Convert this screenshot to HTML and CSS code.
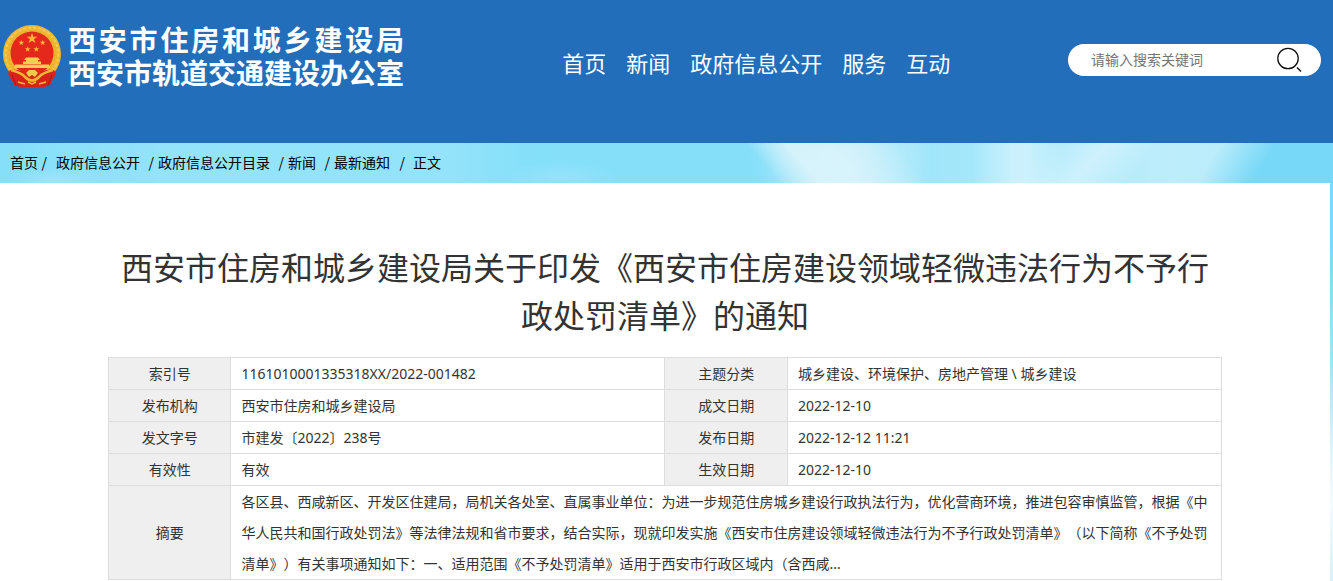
FILE: index.html
```html
<!DOCTYPE html>
<html lang="zh-CN">
<head>
<meta charset="utf-8">
<meta name="viewport" content="width=device-width, initial-scale=1">
<title>西安市住房和城乡建设局</title>
<link rel="stylesheet" href="styles.css">
</head>
<body>
<header class="site-header">
  <div class="brand">
    <svg class="emblem" viewBox="0 0 60 64" aria-hidden="true">
      <path fill="#d9221c" d="M9 44 L6 47 L12 61 L18 63 L42 63 L48 61 L54 47 L51 44Z"/>
      <circle cx="30" cy="30" r="29" fill="#efb72f"/>
      <circle cx="30" cy="30" r="26.5" fill="none" stroke="#f5cb4c" stroke-width="2" stroke-dasharray="3 2"/>
      <circle cx="30" cy="30" r="23" fill="none" stroke="#e2a52a" stroke-width="1" stroke-dasharray="2 3"/>
      <circle cx="30" cy="29" r="21.5" fill="#e5281c"/>
      <defs><path id="star" d="M0 -5 L1.2 -1.6 L4.8 -1.6 L1.9 .6 L3 4 L0 2 L-3 4 L-1.9 .6 L-4.8 -1.6 L-1.2 -1.6Z"/></defs>
      <g fill="#f5b83b">
        <use href="#star" transform="translate(30 14.500) scale(1.100)"/>
        <use href="#star" transform="translate(19.300 18.700) scale(.6)"/>
        <use href="#star" transform="translate(40.700 18.700) scale(.6)"/>
        <use href="#star" transform="translate(25.700 25.300) scale(.6)"/>
        <use href="#star" transform="translate(34.300 25.300) scale(.6)"/>
      </g>
      <g fill="#f7cf50">
        <path d="M24 33.500h12l2 2.500h-2v1.500h3V40H21v-2.500h3V36h-2z"/>
        <path d="M13 40.500h34l1 3.500H12z"/>
      </g>
      <path fill="#d9221c" d="M8 46 Q18 45 23 49 L37 49 Q42 45 52 46 L54 50 L47 62 L36 59 L30 62 L24 59 L13 62 L6 50Z"/>
      <path fill="none" stroke="#efb72f" stroke-width="2.500" d="M9 46 Q20 49 23 53 Q30 60 37 53 Q40 49 51 46"/>
      <path fill="#f5ca4b" d="M24 49 L27 46 H33 L36 49 L33 53 L30 51 L27 53Z"/>
      <path fill="none" stroke="#f2bd35" stroke-width="1.500" d="M16 58 L23 60 M37 60 L44 58 M26 58 L30 60 L34 58"/>
      <path fill="none" stroke="#9f1b1b" stroke-width="1" d="M10 51 L14 61 M50 51 L46 61"/>
    </svg>
    <div class="brand-name">
      <div class="brand-line">西安市住房和城乡建设局</div>
      <div class="brand-line">西安市轨道交通建设办公室</div>
    </div>
  </div>
  <nav class="main-nav" aria-label="主导航">
    <a href="#">首页</a>
    <a href="#">新闻</a>
    <a href="#">政府信息公开</a>
    <a href="#">服务</a>
    <a href="#">互动</a>
  </nav>
  <form class="search" role="search">
    <input class="search-input" type="text" placeholder="请输入搜索关键词" aria-label="请输入搜索关键词">
    <button class="search-button" type="button" aria-label="搜索">
      <svg viewBox="0 0 28 28" width="28" height="28" aria-hidden="true">
        <circle cx="13" cy="12.500" r="10.200" fill="none" stroke="#111" stroke-width="1.300"/>
        <path d="M22 21.500 L26 25.500" stroke="#111" stroke-width="1.500"/>
      </svg>
    </button>
  </form>
</header>
<nav class="breadcrumb" aria-label="当前位置">
  <a href="#">首页</a><span class="sep sep-first">/</span>
  <a href="#">政府信息公开</a><span class="sep">/</span>
  <a href="#">政府信息公开目录</a><span class="sep">/</span>
  <a href="#">新闻</a><span class="sep">/</span>
  <a href="#">最新通知</a><span class="sep sep-last">/</span>
  <span>正文</span>
</nav>
<main class="article">
  <h1 class="article-title">西安市住房和城乡建设局关于印发《西安市住房建设领域轻微违法行为不予行政处罚清单》的通知</h1>
  <table class="meta">
    <colgroup><col class="col-label"><col class="col-value"><col class="col-label"><col class="col-value"></colgroup>
    <tbody>
      <tr><th scope="row">索引号</th><td>1161010001335318XX/2022-001482</td><th scope="row">主题分类</th><td>城乡建设、环境保护、房地产管理 \ 城乡建设</td></tr>
      <tr><th scope="row">发布机构</th><td>西安市住房和城乡建设局</td><th scope="row">成文日期</th><td>2022-12-10</td></tr>
      <tr><th scope="row">发文字号</th><td>市建发〔2022〕238号</td><th scope="row">发布日期</th><td>2022-12-12 11:21</td></tr>
      <tr><th scope="row">有效性</th><td>有效</td><th scope="row">生效日期</th><td>2022-12-10</td></tr>
      <tr><th scope="row">摘要</th><td colspan="3">各区县、西咸新区、开发区住建局，局机关各处室、直属事业单位：为进一步规范住房城乡建设行政执法行为，优化营商环境，推进包容审慎监管，根据《中华人民共和国行政处罚法》等法律法规和省市要求，结合实际，现就印发实施《西安市住房建设领域轻微违法行为不予行政处罚清单》（以下简称《不予处罚清单》）有关事项通知如下：一、适用范围《不予处罚清单》适用于西安市行政区域内（含西咸...</td></tr>
    </tbody>
  </table>
</main>
</body>
</html>
```
FILE: styles.css
```css
* { box-sizing: border-box; }

body {
  margin: 0;
  font-family: "Noto Sans", "Noto Sans CJK SC", sans-serif;
  font-size: 14px;
  color: #333;
  text-spacing-trim: space-all;
  background: linear-gradient(180deg, #7dd9f7 0, #7dd9f7 240px, #9fe3f8 360px, #e4f6fd 460px, #f4fbfe 500px, #d8f1fb 581px);
}

a { color: inherit; text-decoration: none; }

.site-header,
.article-title {
  font-family: "Liberation Sans", "Noto Sans CJK SC", sans-serif;
}

.site-header {
  display: flex;
  align-items: flex-start;
  min-height: 143px;
  padding: 24px 12px 24px 2px;
  background: #226ebb;
  color: #fff;
}

.brand { display: flex; gap: 6px; flex: none; }
.emblem { width: 60px; height: 64px; }
.brand-name {
  padding-top: 1px;
  font-size: 28px;
  font-weight: 700;
  line-height: 33px;
}
.brand-line { text-align: justify; text-align-last: justify; white-space: nowrap; }

.main-nav {
  display: flex;
  gap: 20px;
  margin-left: 12%;
  padding-top: 24px;
  font-size: 22px;
  line-height: 33px;
  white-space: nowrap;
}

.search {
  display: flex;
  align-items: center;
  width: 253px;
  height: 32px;
  margin: 20px 0 0 auto;
  padding: 0 18px 0 23px;
  border-radius: 16px;
  background: #fff;
}
.search-input {
  flex: 1;
  min-width: 0;
  height: 32px;
  padding: 0;
  border: 0;
  outline: 0;
  background: transparent;
  font-family: inherit;
  font-size: 14px;
}
.search-input::placeholder { color: #757575; }
.search-button {
  display: flex;
  padding: 0;
  border: 0;
  background: transparent;
}

.breadcrumb {
  display: flex;
  align-items: center;
  height: 40px;
  padding: 0 10px 2px;
  font-family: "Noto Sans CJK SC", sans-serif;
  color: #000;
  background:
    radial-gradient(ellipse 60px 16px at 42% 85%, rgba(255, 255, 255, .14), transparent),
    radial-gradient(ellipse 50px 14px at 4% 95%, rgba(255, 255, 255, .16), transparent),
    linear-gradient(122deg, transparent 90%, #78d8f7 94%),
    radial-gradient(ellipse 90px 60px at 63% 40%, rgba(223, 245, 252, .5), transparent),
    linear-gradient(50deg, transparent 57%, rgba(217, 243, 251, .9) 60%, rgba(217, 243, 251, .8) 63%, transparent 68%),
    linear-gradient(130deg, transparent 77%, rgba(218, 244, 253, .7) 81%, transparent 85%),
    linear-gradient(90deg, transparent 73%, rgba(218, 244, 253, .7) 76%, rgba(218, 244, 253, .7) 77%, transparent 80%),
    linear-gradient(90deg, #84dff9 0, #93e3fa 12%, #93e3fa 34%, #84dff9 40%, #86dff9 57%, #b5eafa 64%, #a0e6fa 70%, #b0eafb 80%, #bdedfb 88%, #b2eafb 100%);
}
.sep { width: 18px; padding-right: 4px; text-align: right; }
.sep-first { padding-right: 9px; }
.sep-last { width: 23px; padding-right: 8px; }

.article {
  margin-right: 3px;
  padding: 62px 108px 1px;
  background: #fff;
}
.article-title {
  margin: 0 0 16px;
  font-size: 32px;
  font-weight: 400;
  line-height: 48px;
  text-align: center;
}

.meta {
  width: 100%;
  table-layout: fixed;
  border-collapse: collapse;
  line-height: 31px;
}
.col-label { width: 11%; }
.col-value { width: 39%; }
.meta th, .meta td { border: 1px solid #ddd; }
.meta th { padding: 0; background: #efefef; font-weight: 400; }
.meta td { padding: 0 10px; }
```
